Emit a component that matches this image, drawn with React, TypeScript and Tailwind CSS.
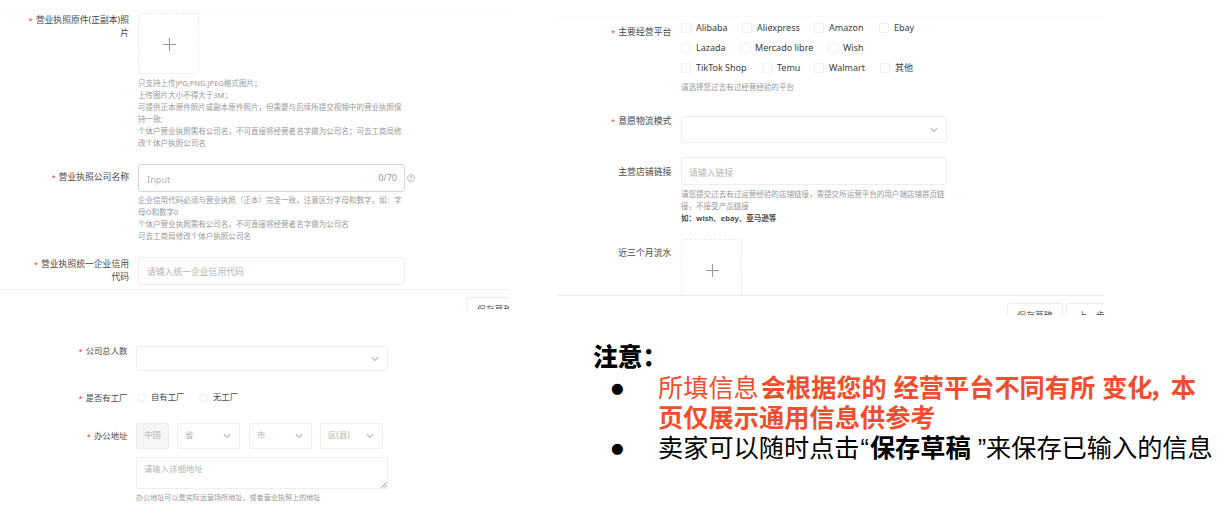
import React from "react";

const UI = "font-['Noto_Sans','Noto_Sans_CJK_SC',sans-serif]";

function Label({ lines, required = true, className = "" }: { lines: string[]; required?: boolean; className?: string }) {
  return (
    <div className={`shrink-0 text-right whitespace-nowrap text-[#4a4a4a] ${className}`}>
      {lines.map((line, i) => (
        <div key={line}>
          {required && i === 0 && <span className="mr-[3px] text-[7.5px] text-[#f04040]">*</span>}
          {line}
        </div>
      ))}
    </div>
  );
}

function Hint({ lines, className = "text-[7.54px] text-[#999]" }: { lines: string[]; className?: string }) {
  return (
    <div className={`whitespace-nowrap leading-[12.1px] ${className}`}>
      {lines.map((line) => (
        <div key={line}>{line}</div>
      ))}
    </div>
  );
}

function Chevron() {
  return (
    <svg width="8" height="6" viewBox="0 0 8 6" fill="none" stroke="#b8b8b8" strokeWidth="1.1" className="shrink-0">
      <path d="M0.8 1.2 L4 4.4 L7.2 1.2" />
    </svg>
  );
}

function Upload() {
  return (
    <div className="flex h-[61px] w-[61px] shrink-0 items-center justify-center rounded-[3px] border border-dashed border-[#ebebeb]">
      <svg width="14" height="14" viewBox="0 0 14 14" stroke="#999" strokeWidth="1.1">
        <path d="M1 7.5 H14 M7.5 1 V14" />
      </svg>
    </div>
  );
}

function Check({ label, className = "" }: { label: string; className?: string }) {
  return (
    <div className={`flex shrink-0 items-center gap-[5px] ${className}`}>
      <span className="h-[10px] w-[10px] rounded-[1px] border border-[#f1f1f1]" />
      <span className="whitespace-nowrap text-[9px] leading-[12px] text-[#3c3c3c]">{label}</span>
    </div>
  );
}

function LicensePanel() {
  return (
    <section className="flex h-[309px] w-[509px] flex-col overflow-hidden">
      <div className="h-[11px] shrink-0 border-b border-[#fafafa]" />
      <div className="flex h-[153px] shrink-0 pt-[2px]">
        <Label className="w-[129px] pt-[1px] text-[8.8px] leading-[12.6px]" lines={["营业执照原件(正副本)照", "片"]} />
        <div className="ml-[9px]">
          <Upload />
          <Hint
            className="mt-[3px] text-[7.54px] text-[#999]"
            lines={[
              "只支持上传JPG,PNG,JPEG格式图片；",
              "上传图片大小不得大于3M；",
              "可提供正本原件照片或副本原件照片，但需要与后续所提交视频中的营业执照保",
              "持一致;",
              "个体户营业执照需有公司名，不可直接将经营者名字做为公司名；可去工商局修",
              "改个体户执照公司名",
            ]}
          />
        </div>
      </div>
      <div className="flex h-[93px] shrink-0">
        <Label className="w-[129px] pt-[7px] text-[8.8px] leading-[13px]" lines={["营业执照公司名称"]} />
        <div className="ml-[9px]">
          <div className="flex items-center">
            <div className="flex h-[28px] w-[267px] items-center justify-between rounded-[3px] border border-[#d6d6d6] pt-[2px] pr-[7px] pl-[8px] text-[9px] text-[#b4b4b4]">
              <span className="pt-[1px] tracking-[0.1px]">Input</span>
              <span className="pb-[3px] text-[#999]">0/70</span>
            </div>
            <svg width="8" height="8" viewBox="0 0 16 16" fill="none" stroke="#aaa" strokeWidth="1.5" className="ml-[2px]">
              <circle cx="8" cy="8" r="7" />
              <path d="M5.8 6.2 A2.2 2.2 0 1 1 8 8.5 V10 M8 11.2 V12.6" />
            </svg>
          </div>
          <Hint
            className="mt-[2px] text-[7.54px] text-[#999]"
            lines={[
              "企业信用代码必须与营业执照（正本）完全一致，注意区分字母和数字，如：字",
              "母O和数字0",
              "个体户营业执照需有公司名，不可直接将经营者名字做为公司名",
              "可去工商局修改个体户执照公司名",
            ]}
          />
        </div>
      </div>
      <div className="flex h-[32px] shrink-0">
        <Label className="w-[129px] pt-[1px] text-[8.8px] leading-[12.6px]" lines={["营业执照统一企业信用", "代码"]} />
        <div className="ml-[9px] flex h-[28px] w-[267px] items-center rounded-[3px] border border-[#eeeeee] px-[8px] pt-[4px] text-[8.8px] text-[#b4b4b4]">
          请输入统一企业信用代码
        </div>
      </div>
      <div className="flex h-[20px] shrink-0 justify-end border-t border-[#f0f0f0] pt-[7px]">
        <div className="h-[28px] w-[43px] shrink-0 overflow-hidden rounded-tl-[3px] border-t border-l border-[#ebebeb] pt-[6px] pl-[10px] text-[8.8px] leading-[13px] whitespace-nowrap text-[#505050]">
          保存草稿
        </div>
      </div>
    </section>
  );
}

function Region({ name, className }: { name: string; className: string }) {
  return (
    <div className={`flex h-[26px] w-[63px] items-center justify-between rounded-[3px] border border-[#eeeeee] pr-[8px] pl-[7px] ${className}`}>
      <span>{name}</span>
      <Chevron />
    </div>
  );
}

function CompanyPanel() {
  return (
    <section className="flex h-[205px] w-[509px] flex-col pt-[37px] text-[8.4px]">
      <div className="flex h-[44.5px] shrink-0">
        <Label className="w-[127.5px] leading-[9px]" lines={["公司总人数"]} />
        <div className="ml-[8.5px] flex h-[25px] w-[252px] items-center justify-end rounded-[2px] border border-[#eeeeee] pr-[8px]">
          <Chevron />
        </div>
      </div>
      <div className="flex h-[32px] shrink-0">
        <Label className="w-[127.5px] leading-[13px]" lines={["是否有工厂"]} />
        <div className="ml-[9.5px] flex h-[14px] items-center text-[#4a4a4a]">
          <span className="mr-[5px] h-[9px] w-[9px] rounded-full border border-[#ececec]" />
          <span className="w-[48px]">自有工厂</span>
          <span className="mr-[5px] h-[9px] w-[9px] rounded-full border border-[#ececec]" />
          <span>无工厂</span>
        </div>
      </div>
      <div className="flex shrink-0">
        <Label className="w-[127.5px] leading-[26px]" lines={["办公地址"]} />
        <div className="ml-[8.5px] text-[#b4b4b4]">
          <div className="flex">
            <div className="flex h-[26px] w-[33px] items-center justify-center rounded-[2px] border border-[#ebebeb] bg-[#f5f5f5]">
              中国
            </div>
            <Region name="省" className="ml-[8px]" />
            <Region name="市" className="ml-[9px]" />
            <Region name="区(县)" className="ml-[8px]" />
          </div>
          <div className="mt-[8px] flex h-[32px] w-[252px] items-end justify-between rounded-[2px] border border-[#eeeeee] pl-[7px]">
            <span className="self-start pt-[4px] leading-[13px]">请输入详细地址</span>
            <svg width="6" height="6" viewBox="0 0 6 6" stroke="#777" strokeWidth="0.8">
              <path d="M0.5 5.5 L5.5 0.5 M3.2 5.5 L5.5 3.2" />
            </svg>
          </div>
          <div className="mt-[2px] text-[7.1px] leading-[12px] whitespace-nowrap text-[#999]">
            办公地址可以是实际运营场所地址，或者营业执照上的地址
          </div>
        </div>
      </div>
    </section>
  );
}

function PlatformPanel() {
  return (
    <section className="ml-[48px] flex h-[315px] w-[547px] flex-col overflow-hidden">
      <div className="h-[17px] shrink-0 border-b border-[#f8f8f8]" />
      <div className="flex h-[99px] shrink-0 pt-[1px]">
        <Label className="w-[114.5px] pt-[7px] text-[8.9px] leading-[13px]" lines={["主要经营平台"]} />
        <div className="ml-[9.5px]">
          <div className="flex h-[20px] items-center">
            <Check label="Alibaba" className="w-[61px]" />
            <Check label="Aliexpress" className="w-[72px]" />
            <Check label="Amazon" className="w-[65px]" />
            <Check label="Ebay" />
          </div>
          <div className="flex h-[20px] items-center">
            <Check label="Lazada" className="w-[59px]" />
            <Check label="Mercado libre" className="w-[88px]" />
            <Check label="Wish" />
          </div>
          <div className="flex h-[20px] items-center">
            <Check label="TikTok Shop" className="w-[81px]" />
            <Check label="Temu" className="w-[52px]" />
            <Check label="Walmart" className="w-[66px]" />
            <Check label="其他" />
          </div>
          <Hint className="mt-[3px] text-[7.54px] text-[#999]" lines={["请选择您过去有过经营经验的平台"]} />
        </div>
      </div>
      <div className="flex h-[41px] shrink-0">
        <Label className="w-[114.5px] text-[8.9px] leading-[10px]" lines={["意愿物流模式"]} />
        <div className="ml-[9.5px] flex h-[27px] w-[266px] items-center justify-end rounded-[3px] border border-[#eeeeee] pr-[8px]">
          <Chevron />
        </div>
      </div>
      <div className="flex h-[82px] shrink-0">
        <Label required={false} className="w-[114.5px] pt-[8px] text-[8.9px] leading-[13px]" lines={["主营店铺链接"]} />
        <div className="ml-[9.5px]">
          <div className="flex h-[28px] w-[266px] items-center rounded-[3px] border border-[#eeeeee] px-[7px] pt-[3px] text-[8.9px] text-[#b4b4b4]">
            请输入链接
          </div>
          <Hint
            className="mt-[2.5px] text-[7.54px] text-[#999]"
            lines={["请您提交过去有过运营经验的店铺链接，需提交所运营平台的用户端店铺首页链", "接，不接受产品链接"]}
          />
          <Hint className="text-[7.5px] font-bold text-[#505050]" lines={["如：wish、ebay、亚马逊等"]} />
        </div>
      </div>
      <div className="flex h-[56px] shrink-0 overflow-hidden">
        <Label required={false} className="w-[114.5px] pt-[7px] text-[8.9px] leading-[13px]" lines={["近三个月流水"]} />
        <div className="ml-[9.5px]">
          <Upload />
        </div>
      </div>
      <div className="flex h-[20px] shrink-0 justify-end border-t border-[#ebebeb] pt-[7px] text-[8.9px] leading-[13px] whitespace-nowrap text-[#505050]">
        <div className="h-[28px] w-[56px] shrink-0 rounded-[3px] border border-[#ebebeb] pt-[5px] text-center">保存草稿</div>
        <div className="ml-[3px] h-[28px] w-[38px] shrink-0 overflow-hidden rounded-tl-[3px] border-t border-l border-[#ebebeb] pt-[5px] pl-[11px]">
          上一步
        </div>
      </div>
    </section>
  );
}

function Bullet() {
  return <span className="w-[47px] shrink-0 font-['DejaVu_Sans'] text-[14.5px]">●</span>;
}

function Notice() {
  return (
    <section className="ml-[84px] pt-[28px] font-['Liberation_Sans','Noto_Sans_CJK_SC',sans-serif] text-[25.2px] leading-[30px] whitespace-nowrap text-black">
      <div className="text-[24.8px] font-black">注意：</div>
      <div className="flex pl-[18px]">
        <Bullet />
        <div className="text-[#f04e2e]">
          <div>
            所填信息<b className="ml-[2px]">会根据您的 经营平台不同有所 变化<span className="-ml-[4px] tracking-[-3px]">，</span>本</b>
          </div>
          <div className="font-bold tracking-[0.05px]">页仅展示通用信息供参考</div>
        </div>
      </div>
      <div className="flex pl-[18px]">
        <Bullet />
        <div>
          卖家可以随时点击<span className="mx-[1px]">“</span><b>保存草稿</b> ”来保存已输入的信息
        </div>
      </div>
    </section>
  );
}

export default function App() {
  return (
    <main className={`flex h-[514px] w-[1221px] overflow-hidden bg-white ${UI}`}>
      <div className="flex w-[509px] shrink-0 flex-col">
        <LicensePanel />
        <CompanyPanel />
      </div>
      <div className="flex w-[712px] shrink-0 flex-col">
        <PlatformPanel />
        <Notice />
      </div>
    </main>
  );
}
